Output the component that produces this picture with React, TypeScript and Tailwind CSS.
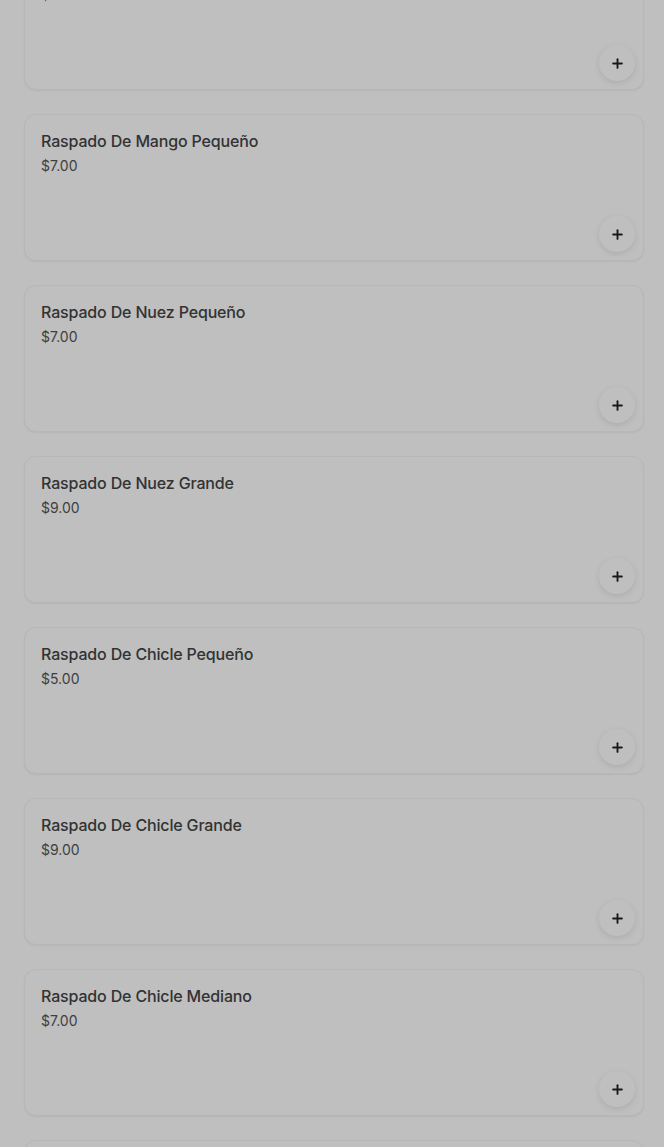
import { Plus } from "lucide-react";

const items = [
  { name: "Raspado De Mango Grande", price: "$9.00" },
  { name: "Raspado De Mango Pequeño", price: "$7.00" },
  { name: "Raspado De Nuez Pequeño", price: "$7.00" },
  { name: "Raspado De Nuez Grande", price: "$9.00" },
  { name: "Raspado De Chicle Pequeño", price: "$5.00" },
  { name: "Raspado De Chicle Grande", price: "$9.00" },
  { name: "Raspado De Chicle Mediano", price: "$7.00" },
  { name: "Raspado De Fresa Pequeño", price: "$7.00" },
];

const ItemCard = ({ name, price }: { name: string; price: string }) => {
  return (
    <div className="flex flex-col h-[147px] rounded-xl border border-gray-100 bg-white shadow-[0_1px_2px_rgba(0,0,0,0.06)] pt-[14px] pl-4 pr-2 pb-2">
      <div className="flex flex-col">
        <span className="text-base font-medium leading-6 tracking-[-0.01em] text-[#444]">{name}</span>
        <span className="text-sm leading-5 text-[#555] mt-[3px]">{price}</span>
      </div>
      <div className="mt-auto flex justify-end">
        <button className="w-9 h-9 rounded-full bg-white shadow-[0_2px_6px_rgba(0,0,0,0.1)] flex items-center justify-center text-[#222]">
          <Plus size={15} strokeWidth={3} />
        </button>
      </div>
    </div>
  );
};

export default function App() {
  return (
    <div className="relative min-h-screen bg-white overflow-hidden font-['Inter',sans-serif]">
      {/* menu list */}
      <div className="flex flex-col gap-6 pl-6 pr-5 mt-[-57px]">
        {items.map((item) => (
          <ItemCard key={item.name} name={item.name} price={item.price} />
        ))}
      </div>

      {/* modal backdrop */}
      <div className="fixed inset-0 bg-black/25"></div>
    </div>
  );
}
